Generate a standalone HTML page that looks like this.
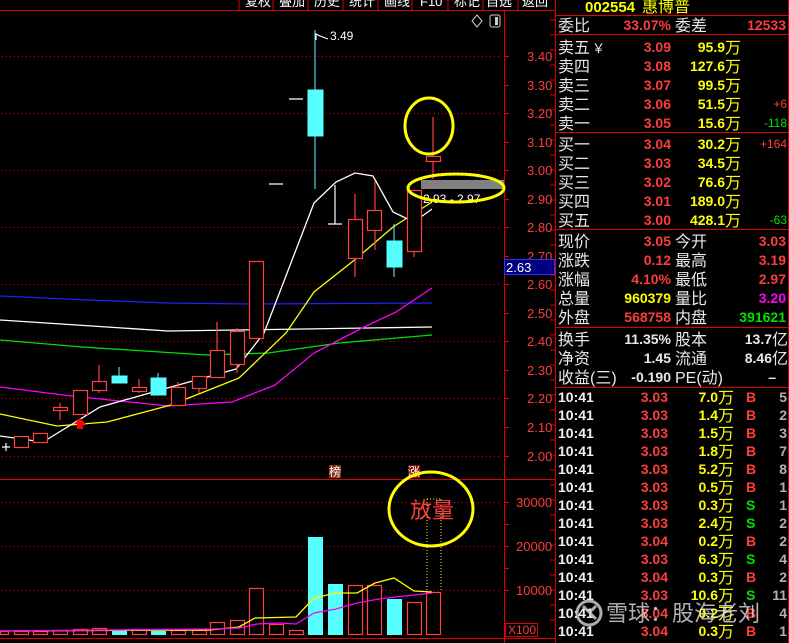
<!DOCTYPE html>
<html><head><meta charset="utf-8">
<style>
html,body{margin:0;padding:0;background:#000;}
svg{display:block;}
.n{font-family:"Liberation Sans",sans-serif;font-weight:bold;font-size:14px;}
.c{font-family:"Liberation Sans","Noto Sans CJK SC",sans-serif;font-size:16px;}
.ax{font-family:"Liberation Sans",sans-serif;font-size:13px;fill:#ff3c3c;}
</style></head>
<body>
<svg width="789" height="643" viewBox="0 0 789 643" xmlns="http://www.w3.org/2000/svg">
<rect width="789" height="643" fill="#000"/>
<g class="c" fill="#fff" style="font-size:13px">
<text x="245" y="6">复权</text><text x="279" y="6">叠加</text><text x="314" y="6">历史</text><text x="349" y="6">统计</text><text x="384" y="6">画线</text><text x="420" y="6">F10</text><text x="454" y="6">标记</text><text x="486" y="6">自选</text><text x="522" y="6">返回</text>
</g>
<g stroke="#e00000" stroke-width="1">
<line x1="239" y1="0" x2="239" y2="10"/><line x1="273" y1="0" x2="273" y2="10"/><line x1="308" y1="0" x2="308" y2="10"/><line x1="343" y1="0" x2="343" y2="10"/><line x1="378" y1="0" x2="378" y2="10"/><line x1="412" y1="0" x2="412" y2="10"/><line x1="448" y1="0" x2="448" y2="10"/><line x1="483" y1="0" x2="483" y2="10"/><line x1="518" y1="0" x2="518" y2="10"/>
<line x1="0" y1="10.5" x2="555" y2="10.5"/>
<line x1="504.5" y1="10" x2="504.5" y2="643"/>
<line x1="555.5" y1="0" x2="555.5" y2="643"/>
<line x1="0" y1="479.5" x2="555" y2="479.5"/>
<line x1="0" y1="638.5" x2="555" y2="638.5"/>
</g>
<path d="M477 15 L482 21 L477 27 L472 21 Z" fill="none" stroke="#ccc"/>
<rect x="490" y="15" width="10" height="12" rx="2" fill="none" stroke="#ccc"/><rect x="495" y="17" width="3" height="8" fill="#ccc"/>
<g stroke="#e00000" stroke-dasharray="1,3">
<line x1="2" y1="56.5" x2="500" y2="56.5"/><line x1="2" y1="113.5" x2="500" y2="113.5"/><line x1="2" y1="170.5" x2="500" y2="170.5"/><line x1="2" y1="227.5" x2="500" y2="227.5"/><line x1="2" y1="284.5" x2="500" y2="284.5"/><line x1="2" y1="341.5" x2="500" y2="341.5"/><line x1="2" y1="398.5" x2="500" y2="398.5"/><line x1="2" y1="456.5" x2="500" y2="456.5"/>
<line x1="2" y1="502.5" x2="500" y2="502.5"/><line x1="2" y1="546.5" x2="500" y2="546.5"/><line x1="2" y1="590.5" x2="500" y2="590.5"/>
</g>
<g stroke="#e00000">
<path d="M504 56.5h5M504 85.5h5M504 113.5h5M504 142.5h5M504 170.5h5M504 199.5h5M504 227.5h5M504 256.5h5M504 284.5h5M504 313.5h5M504 341.5h5M504 370.5h5M504 398.5h5M504 427.5h5M504 456.5h5M504 502.5h5M504 524.5h5M504 546.5h5M504 568.5h5M504 590.5h5"/>
<path d="M550 20h5M550 35h5M550 50h5M550 65h5M550 80h5M550 95h5M550 110h5M550 125h5M550 140h5M550 155h5M550 170h5M550 185h5M550 200h5M550 215h5M550 230h5M550 245h5M550 260h5M550 275h5M550 290h5M550 305h5M550 320h5M550 335h5M550 350h5M550 365h5M550 380h5M550 395h5M550 410h5M550 425h5M550 440h5M550 455h5M550 470h5M550 485h5M550 500h5M550 515h5M550 530h5M550 545h5M550 560h5M550 575h5M550 590h5M550 605h5M550 620h5"/>
</g>
<g class="ax">
<text x="527" y="61">3.40</text><text x="527" y="90">3.30</text><text x="527" y="118">3.20</text><text x="527" y="147">3.10</text><text x="527" y="175">3.00</text><text x="527" y="204">2.90</text><text x="527" y="232">2.80</text><text x="527" y="261">2.70</text><text x="527" y="289">2.60</text><text x="527" y="318">2.50</text><text x="527" y="346">2.40</text><text x="527" y="375">2.30</text><text x="527" y="403">2.20</text><text x="527" y="432">2.10</text><text x="527" y="461">2.00</text>
<text x="516" y="507">30000</text><text x="516" y="551">20000</text><text x="516" y="595">10000</text>
</g>
<rect x="505.5" y="623.5" width="32" height="13" fill="none" stroke="#e00000"/>
<text x="508" y="634" class="ax" style="font-size:12px">X100</text>
<rect x="504.5" y="259.5" width="50" height="15" fill="#000080" stroke="#3030ff"/>
<text x="506" y="272" fill="#fff" font-family="Liberation Sans,sans-serif" font-size="13">2.63</text>
<g fill="none" stroke-width="1.3">
<polyline stroke="#2020ff" points="0,296 89,300 168,303 250,304 432,303"/>
<polyline stroke="#fff" points="0,320 46,323 168,331 304,329 432,327"/>
<polyline stroke="#00e000" points="0,340 82,347 207,355 268,353 339,343 432,335"/>
<polyline stroke="#ff00ff" points="0,387 71,396 168,406 232,402 275,385 314,353 364,327 396,312 432,288"/>
<polyline stroke="#ffff00" points="0,414 57,426 107,422 171,405 239,378 286,333 314,292 357,258 393,227 432,202"/>
<polyline stroke="#fff" points="0,436 43,442 100,407 171,387 236,369 264,333 314,203 336,182 355,173 373,176 393,212 414,222 432,209"/>
</g>
<g stroke="#ff4040" fill="#000" stroke-width="1.2">
<path d="M2 447h8M6 443v8" stroke="#fff"/>
<rect x="14.5" y="436.5" width="14" height="11"/>
<rect x="33.5" y="433.5" width="14" height="9"/>
<line x1="60" y1="403" x2="60" y2="420"/><rect x="53.5" y="407.5" width="14" height="3"/>
<rect x="73.5" y="390.5" width="14" height="24"/>
<line x1="99" y1="365" x2="99" y2="393"/><rect x="92.5" y="381.5" width="14" height="9"/>
<line x1="139" y1="379" x2="139" y2="393"/><rect x="132.5" y="387.5" width="14" height="4"/>
<line x1="178" y1="382" x2="178" y2="387"/><rect x="171.5" y="387.5" width="14" height="18"/>
<line x1="199" y1="388" x2="199" y2="393"/><rect x="192.5" y="376.5" width="14" height="12"/>
<line x1="217" y1="322" x2="217" y2="378"/><rect x="210.5" y="350.5" width="14" height="27"/>
<line x1="237" y1="328" x2="237" y2="373"/><rect x="230.5" y="331.5" width="14" height="33"/>
<rect x="249.5" y="261.5" width="14" height="77"/>
<line x1="355" y1="194" x2="355" y2="277"/><rect x="348.5" y="219.5" width="14" height="39"/>
<line x1="375" y1="181" x2="375" y2="250"/><rect x="367.5" y="210.5" width="14" height="20"/>
<line x1="414" y1="251" x2="414" y2="257"/><rect x="407.5" y="190.5" width="14" height="61"/>
<line x1="433" y1="117" x2="433" y2="179"/><rect x="426.5" y="156.5" width="14" height="5"/>
</g>
<g fill="#55ffff" stroke="#55ffff">
<line x1="119" y1="367" x2="119" y2="376"/><rect x="112" y="376" width="15" height="7"/>
<line x1="158" y1="373" x2="158" y2="378"/><rect x="151" y="378" width="15" height="17"/>
<line x1="315" y1="30" x2="315" y2="189"/><rect x="308" y="90" width="15" height="46"/>
<line x1="394" y1="224" x2="394" y2="277"/><rect x="387" y="241" width="15" height="26"/>
</g>
<g stroke="#fff" stroke-width="1.2">
<path d="M269 184h14M289 99h14M335 185v39M328 224h14"/>
<path d="M316 40v-6l4 2M320 36l8 3" fill="none"/>
</g>
<text x="330" y="40" fill="#fff" font-family="Liberation Sans,sans-serif" font-size="12">3.49</text>
<path d="M80 418 L86 424 L83 424 L83 429 L77 429 L77 424 L74 424 Z" fill="#ff0000"/>
<rect x="421" y="180" width="83" height="9" fill="#808080"/>
<text x="423" y="203" fill="#fff" font-family="Liberation Sans,sans-serif" font-size="12">2.93 - 2.97</text>
<ellipse cx="429" cy="126" rx="24" ry="28" fill="none" stroke="#ffff00" stroke-width="3"/>
<ellipse cx="456" cy="188" rx="48" ry="14" fill="none" stroke="#ffff00" stroke-width="3"/>
<rect x="329" y="465" width="12" height="13" fill="#803010"/>
<text x="329" y="476" fill="#fff" class="c" style="font-size:12px">榜</text>
<rect x="408" y="465" width="12" height="13" fill="#801010"/>
<text x="408" y="476" fill="#fff" class="c" style="font-size:12px">涨</text>
<g stroke="#ff4040" fill="#000" stroke-width="1.2">
<rect x="0.5" y="631.5" width="8" height="3"/><rect x="14.5" y="631.5" width="14" height="3"/><rect x="33.5" y="631.5" width="14" height="3"/><rect x="53.5" y="630.5" width="14" height="4"/><rect x="73.5" y="629.5" width="14" height="5"/><rect x="92.5" y="628.5" width="14" height="6"/><rect x="132.5" y="629.5" width="14" height="5"/><rect x="171.5" y="630.5" width="14" height="4"/><rect x="192.5" y="630.5" width="14" height="4"/><rect x="210.5" y="622.5" width="14" height="12"/><rect x="230.5" y="620.5" width="14" height="14"/><rect x="249.5" y="588.5" width="14" height="46"/><rect x="269.5" y="624.5" width="14" height="10"/><rect x="289.5" y="630.5" width="14" height="4"/><rect x="348.5" y="585.5" width="14" height="49"/><rect x="367.5" y="585.5" width="14" height="49"/><rect x="407.5" y="602.5" width="14" height="32"/><rect x="426.5" y="592.5" width="14" height="42"/>
</g>
<g fill="#55ffff">
<rect x="112" y="630" width="15" height="5"/><rect x="151" y="631" width="15" height="4"/><rect x="308" y="537" width="15" height="98"/><rect x="328" y="584" width="15" height="51"/><rect x="387" y="599" width="15" height="36"/>
</g>
<g fill="none" stroke-width="1.3">
<polyline stroke="#ffff00" points="0,631 210,630 239,627 255,618 296,617 314,598 336,593 357,593 375,583 394,578 414,591 432,592"/>
<polyline stroke="#ff00ff" points="0,631 214,629 239,628 257,624 279,623 296,624 314,613 336,609 357,603 379,599 396,597 432,593"/>
</g>
<path d="M427 499v93M441 499v93M427 499h14" stroke="#ffff00" stroke-dasharray="1,2" fill="none"/>
<ellipse cx="431" cy="509" rx="42" ry="37" fill="none" stroke="#ffff00" stroke-width="3"/>
<text x="410" y="518" fill="#ff3c3c" font-family="Noto Sans CJK SC,sans-serif" font-size="22">放量</text>
<g stroke="#e00000"><path d="M555 15.5h234M555 34.5h234M555 132.5h234M555 229.5h234M555 327.5h234M555 387.5h234M788.5 0v643"/></g>
<text x="585" y="12" fill="#ffff00" class="n" style="font-size:15px">002554</text>
<text x="642" y="12" fill="#ffff00" class="c">惠博普</text>
<g class="c" fill="#e8e8e8">
<text x="558" y="31">委比</text><text x="675" y="31">委差</text>
<text x="558" y="53">卖五</text><text x="592" y="53" style="font-size:13px">￥</text><text x="558" y="72">卖四</text><text x="558" y="91">卖三</text><text x="558" y="110">卖二</text><text x="558" y="129">卖一</text>
<text x="558" y="150">买一</text><text x="558" y="169">买二</text><text x="558" y="188">买三</text><text x="558" y="207">买四</text><text x="558" y="226">买五</text>
<text x="558" y="247">现价</text><text x="675" y="247">今开</text><text x="558" y="266">涨跌</text><text x="675" y="266">最高</text><text x="558" y="285">涨幅</text><text x="675" y="285">最低</text><text x="558" y="304">总量</text><text x="675" y="304">量比</text><text x="558" y="323">外盘</text><text x="675" y="323">内盘</text>
<text x="558" y="345">换手</text><text x="675" y="345">股本</text><text x="558" y="364">净资</text><text x="675" y="364">流通</text><text x="558" y="383">收益(三)</text><text x="675" y="383">PE(动)</text>
</g>
<g class="n" text-anchor="end">
<text x="671" y="30" fill="#ff3c3c">33.07%</text><text x="786" y="30" fill="#ff3c3c">12533</text>
<g fill="#ff3c3c"><text x="671" y="52">3.09</text><text x="671" y="71">3.08</text><text x="671" y="90">3.07</text><text x="671" y="109">3.06</text><text x="671" y="128">3.05</text><text x="671" y="149">3.04</text><text x="671" y="168">3.03</text><text x="671" y="187">3.02</text><text x="671" y="206">3.01</text><text x="671" y="225">3.00</text></g>
<g fill="#ffff00"><text x="725" y="52">95.9</text><text x="725" y="71">127.6</text><text x="725" y="90">99.5</text><text x="725" y="109">51.5</text><text x="725" y="128">15.6</text><text x="725" y="149">30.2</text><text x="725" y="168">34.5</text><text x="725" y="187">76.6</text><text x="725" y="206">189.0</text><text x="725" y="225">428.1</text></g>
<g style="font-weight:normal;font-size:12px"><text x="787" y="108" fill="#ff3c3c">+6</text><text x="787" y="127" fill="#00e000">-118</text><text x="787" y="148" fill="#ff3c3c">+164</text><text x="787" y="224" fill="#00e000">-63</text></g>
<text x="671" y="246" fill="#ff3c3c">3.05</text><text x="786" y="246" fill="#ff3c3c">3.03</text>
<text x="671" y="265" fill="#ff3c3c">0.12</text><text x="786" y="265" fill="#ff3c3c">3.19</text>
<text x="671" y="284" fill="#ff3c3c">4.10%</text><text x="786" y="284" fill="#ff3c3c">2.97</text>
<text x="671" y="303" fill="#ffff00">960379</text><text x="786" y="303" fill="#ff00ff">3.20</text>
<text x="671" y="322" fill="#ff3c3c">568758</text><text x="786" y="322" fill="#00e000">391621</text>
<text x="671" y="344" fill="#e8e8e8">11.35%</text><text x="772" y="344" fill="#e8e8e8">13.7</text>
<text x="671" y="363" fill="#e8e8e8">1.45</text><text x="772" y="363" fill="#e8e8e8">8.46</text>
<text x="671" y="382" fill="#e8e8e8">-0.190</text><text x="776" y="382" fill="#e8e8e8">–</text>
</g>
<g class="c" fill="#ffff00"><text x="725" y="53">万</text><text x="725" y="72">万</text><text x="725" y="91">万</text><text x="725" y="110">万</text><text x="725" y="129">万</text><text x="725" y="150">万</text><text x="725" y="169">万</text><text x="725" y="188">万</text><text x="725" y="207">万</text><text x="725" y="226">万</text></g>
<g class="c" fill="#e8e8e8"><text x="772" y="345">亿</text><text x="772" y="364">亿</text></g>
<g class="n">
<g fill="#f0f0f0"><text x="558" y="402">10:41</text><text x="558" y="420">10:41</text><text x="558" y="438">10:41</text><text x="558" y="456">10:41</text><text x="558" y="474">10:41</text><text x="558" y="492">10:41</text><text x="558" y="510">10:41</text><text x="558" y="528">10:41</text><text x="558" y="546">10:41</text><text x="558" y="564">10:41</text><text x="558" y="582">10:41</text><text x="558" y="600">10:41</text><text x="558" y="618">10:41</text><text x="558" y="636">10:41</text></g>
<g fill="#ff3c3c" text-anchor="end"><text x="668" y="402">3.03</text><text x="668" y="420">3.03</text><text x="668" y="438">3.03</text><text x="668" y="456">3.03</text><text x="668" y="474">3.03</text><text x="668" y="492">3.03</text><text x="668" y="510">3.03</text><text x="668" y="528">3.03</text><text x="668" y="546">3.04</text><text x="668" y="564">3.03</text><text x="668" y="582">3.04</text><text x="668" y="600">3.03</text><text x="668" y="618">3.04</text><text x="668" y="636">3.04</text></g>
<g fill="#ffff00" text-anchor="end"><text x="718" y="402">7.0</text><text x="718" y="420">1.4</text><text x="718" y="438">1.5</text><text x="718" y="456">1.8</text><text x="718" y="474">5.2</text><text x="718" y="492">0.5</text><text x="718" y="510">0.3</text><text x="718" y="528">2.4</text><text x="718" y="546">0.2</text><text x="718" y="564">6.3</text><text x="718" y="582">0.3</text><text x="718" y="600">10.6</text><text x="718" y="618">0.2</text><text x="718" y="636">0.3</text></g>
<g fill="#ff3c3c"><text x="746" y="402">B</text><text x="746" y="420">B</text><text x="746" y="438">B</text><text x="746" y="456">B</text><text x="746" y="474">B</text><text x="746" y="492">B</text><text x="746" y="546">B</text><text x="746" y="582">B</text><text x="746" y="618">B</text><text x="746" y="636">B</text></g>
<g fill="#00e000"><text x="746" y="510">S</text><text x="746" y="528">S</text><text x="746" y="564">S</text><text x="746" y="600">S</text></g>
<g fill="#b0b0b0" text-anchor="end"><text x="787" y="402">5</text><text x="787" y="420">2</text><text x="787" y="438">3</text><text x="787" y="456">7</text><text x="787" y="474">8</text><text x="787" y="492">1</text><text x="787" y="510">1</text><text x="787" y="528">2</text><text x="787" y="546">2</text><text x="787" y="564">4</text><text x="787" y="582">2</text><text x="787" y="600">11</text><text x="787" y="618">4</text><text x="787" y="636">1</text></g>
</g>
<g class="c" fill="#ffff00"><text x="718" y="403">万</text><text x="718" y="421">万</text><text x="718" y="439">万</text><text x="718" y="457">万</text><text x="718" y="475">万</text><text x="718" y="493">万</text><text x="718" y="511">万</text><text x="718" y="529">万</text><text x="718" y="547">万</text><text x="718" y="565">万</text><text x="718" y="583">万</text><text x="718" y="601">万</text><text x="718" y="619">万</text><text x="718" y="637">万</text></g>
<g opacity="0.8">
<circle cx="589" cy="613" r="12" fill="none" stroke="#d8d8d8" stroke-width="3"/>
<path d="M583 606 L596 619 M596 606 L589 613" stroke="#d8d8d8" stroke-width="3"/>
<text x="606" y="621" fill="#e0e0e0" font-family="Noto Sans CJK SC,sans-serif" font-size="22">雪球：股海老刘</text>
</g>
</svg>
</body></html>
